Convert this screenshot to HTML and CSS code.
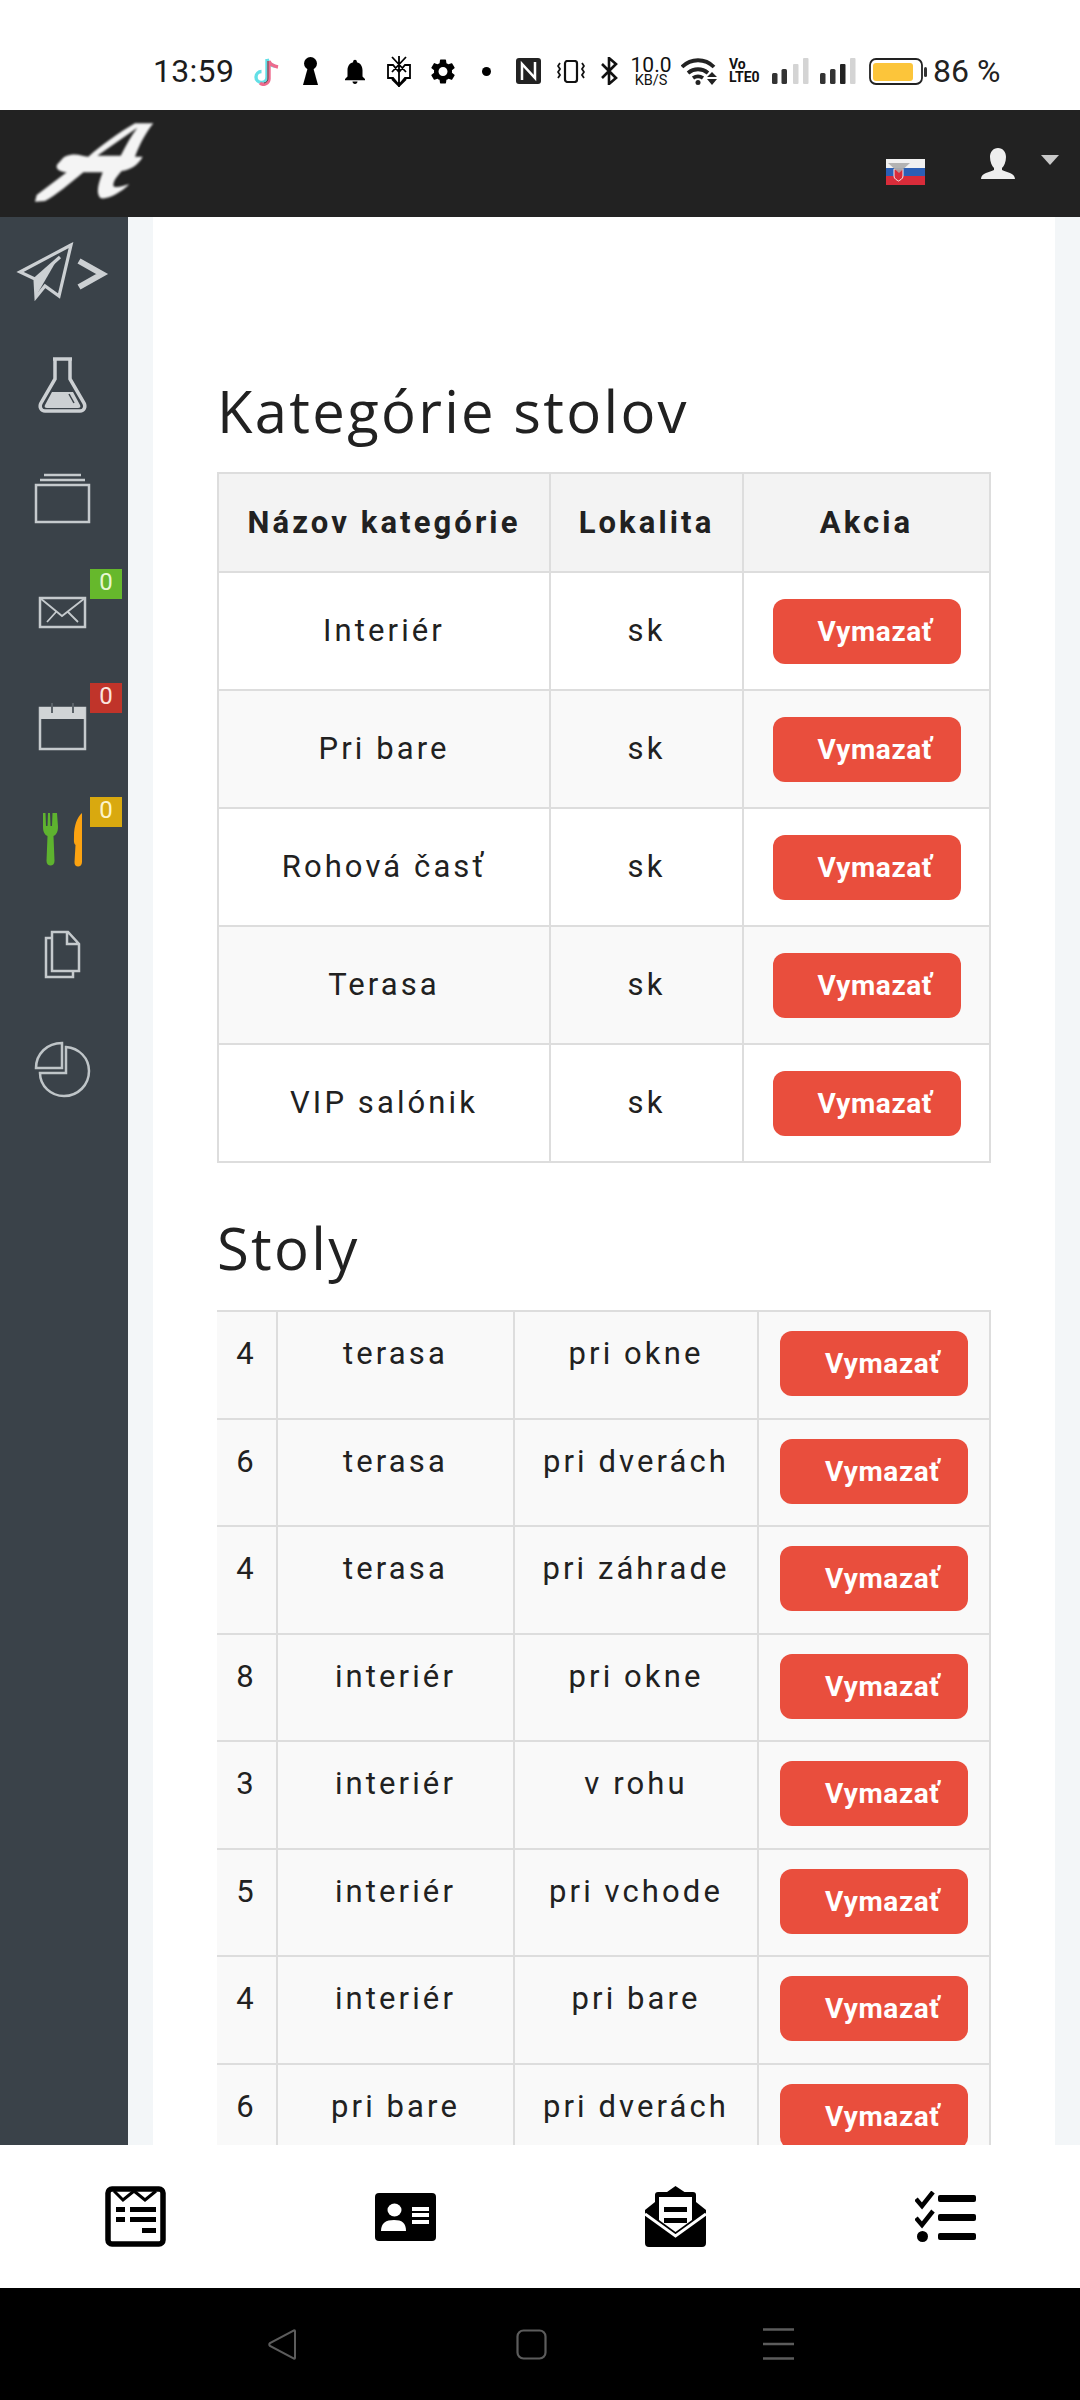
FILE: index.html
```html
<!DOCTYPE html>
<html lang="sk">
<head>
<meta charset="utf-8">
<title>Kategórie stolov</title>
<link rel="stylesheet" href="styles.css">
</head>
<body>
<div class="phone">
  <div class="status">
    <span class="time">13:59</span>
    <svg class="s-tiktok" viewBox="0 0 27 30"><g fill="none" stroke-width="3.4"><path stroke="#62dfe6" d="M14 3v18a5.5 5.5 0 1 1-5.5-5.5M14 3c1 4 4 6.500 8 7"/><path stroke="#ee6a8d" d="M16 5v18a5.500 5.500 0 0 1-9 4M16 5c1 3 4 5 9 6"/><path stroke="#555" stroke-width="1" d="M15 5v17a5 5 0 0 1-4 5"/></g></svg>
    <svg class="s-key" viewBox="0 0 15 28"><circle cx="7.500" cy="6.500" r="6.500"/><path d="M5 10h5l5 18H0z"/></svg>
    <svg class="s-bell" viewBox="4 2 16 20"><path d="M12 22c1.100 0 2-.9 2-2h-4c0 1.100.9 2 2 2zm6-6v-5c0-3.070-1.630-5.640-4.500-6.320V4c0-.83-.67-1.500-1.500-1.500s-1.500.67-1.500 1.500v.68C7.640 5.360 6 7.920 6 11v5l-2 2v1h16v-1l-2-2z"/></svg>
    <svg class="s-star" viewBox="0 0 24 31"><g fill="none" stroke="#000" stroke-width="1.800"><path d="M12 0v31M5 1l14 15M19 1L5 16M1 9h5l6 7 6-7h5v13h-5l-6 7-6-7H1zM5 23l7 7 7-7"/></g></svg>
    <svg class="s-gear" viewBox="2.500 2 19 20"><path d="M19.140 12.940c.04-.3.06-.61.06-.94 0-.32-.02-.64-.07-.94l2.030-1.580c.18-.14.23-.41.12-.61l-1.920-3.320c-.12-.22-.37-.29-.59-.22l-2.390.96c-.5-.38-1.030-.7-1.620-.94l-.36-2.540c-.04-.24-.24-.41-.48-.41h-3.840c-.24 0-.43.17-.47.41l-.36 2.540c-.59.24-1.130.57-1.620.94l-2.390-.96c-.22-.08-.47 0-.59.22L2.740 8.870c-.12.21-.08.47.12.61l2.030 1.580c-.05.3-.09.63-.09.94s.02.64.07.94l-2.030 1.580c-.18.14-.23.41-.12.61l1.920 3.320c.12.22.37.29.59.22l2.390-.96c.5.38 1.030.7 1.620.94l.36 2.540c.05.24.24.41.48.41h3.840c.24 0 .44-.17.47-.41l.36-2.540c.59-.24 1.130-.56 1.620-.94l2.390.96c.22.08.47 0 .59-.22l1.920-3.320c.12-.22.07-.47-.12-.61l-2.010-1.580zM12 15.600c-1.980 0-3.600-1.620-3.600-3.600s1.620-3.600 3.600-3.600 3.600 1.620 3.600 3.600-1.620 3.600-3.600 3.600z"/></svg>
    <span class="s-dot"></span>
    <svg class="s-nfc" viewBox="0 0 25 26"><rect width="25" height="26" rx="3" fill="#222"/><path d="M6 22V6l13 14V4" fill="none" stroke="#fff" stroke-width="2.500"/></svg>
    <svg class="s-vib" viewBox="0 0 28 23"><rect x="8" y="1" width="12" height="21" rx="2.500" fill="none" stroke="#111" stroke-width="2.200"/><path d="M3 3l-2 3 2 3-2 3 2 3-2 3M25 3l2 3-2 3 2 3-2 3 2 3" fill="none" stroke="#111" stroke-width="1.800"/></svg>
    <svg class="s-bt" viewBox="0 0 18 28"><path d="M2 7l14 14-7 6V1l7 6L2 21" fill="none" stroke="#111" stroke-width="2.600"/></svg>
    <span class="speed"><span class="speed-num">10.0</span><span class="speed-unit">KB/S</span></span>
    <svg class="s-wifi" viewBox="0 0 36 28"><g fill="none" stroke="#222" stroke-width="3.800"><path d="M1 10c9-9 23-9 32 0M7 16c6-5 14-5 20 0M12 21c3-2 7-2 10 0"/></g><circle cx="17" cy="25.500" r="2.500" fill="#222"/><path d="M31 15l5 5h-10zM31 28l-5-6h10z" fill="#222"/></svg>
    <span class="volte"><span>Vo</span><span>LTE0</span></span>
    <svg class="s-sig" viewBox="0 0 37 27"><rect y="15" width="5.500" height="11" rx="1.500" fill="#333"/><rect x="9.500" y="11" width="5.500" height="15" rx="1.500" fill="#333"/><rect x="21" y="6" width="5.500" height="20" rx="1" fill="#d4d4d4"/><rect x="31" y="0" width="5.500" height="26" rx="1" fill="#d4d4d4"/></svg>
    <svg class="s-sig s-sig2" viewBox="0 0 37 27"><rect y="15" width="5.500" height="11" rx="1.500" fill="#333"/><rect x="10" y="11" width="5.500" height="15" rx="1.500" fill="#333"/><rect x="20" y="6" width="5.500" height="20" rx="1" fill="#222"/><rect x="30" y="0" width="5.500" height="26" rx="1" fill="#d4d4d4"/></svg>
    <svg class="s-bat" viewBox="0 0 58 27"><rect x="1" y="1" width="52" height="25" rx="6" fill="none" stroke="#222" stroke-width="1.800"/><rect x="4" y="5" width="40" height="18" rx="3" fill="#fcc53a"/><rect x="55" y="9" width="3" height="10" rx="1.500" fill="#333"/></svg>
    <span class="pct">86 %</span>
  </div>

  <header class="navbar">
    <svg class="logo" viewBox="0 0 450 285"><path fill="#f4f4f4" fill-rule="evenodd" d="M400 25L345 25C300 50 240 95 205 125C185 125 175 115 150 120C130 122 125 135 112 148C105 160 115 170 140 172L50 240L45 260L75 258C110 240 150 205 190 172L248 172C240 195 225 230 240 248C255 258 300 235 328 208C310 212 285 222 280 212C280 195 295 180 305 168C330 165 355 150 368 125L345 125C360 85 380 50 400 25ZM352 38L232 122L302 122C318 90 335 60 352 38Z"/></svg>
    <svg class="flag" viewBox="0 0 39 26"><rect width="39" height="9" fill="#f1f1f1"/><rect y="9" width="39" height="8" fill="#2c5fb5"/><rect y="17" width="39" height="9" fill="#d92c3a"/><path d="M8 10h9v7c0 3-3 4-4.500 5C11 21 8 20 8 17z" fill="#d92c3a" stroke="#eee"/><path d="M2 4h22L13 14z" fill="#a8a8a8" opacity=".85"/></svg>
    <svg class="user" viewBox="0 0 34 31"><path fill="#eee" d="M17 0c5 0 8 4 8 9 0 5-2 9-4 11v2c4 2 13 3 13 9H0c0-6 9-7 13-9v-2c-2-2-4-6-4-11 0-5 3-9 8-9z"/></svg>
    <span class="caret"></span>
  </header>

  <div class="main">
    <nav class="side">
      <a class="side-item"><svg viewBox="0 0 128 114"><g fill="none" stroke="#ccd0d3" stroke-width="3.200" stroke-linejoin="miter"><path d="M71 31L20 58l15 7 1 18 9-11 14 10z"/><path d="M35 65l25-22"/></g><path d="M34 65l24-21-15 26-7 12z" fill="#ccd0d3"/><path d="M79 47l23 13-23 13" fill="none" stroke="#ccd0d3" stroke-width="6"/></svg></a>
      <a class="side-item"><svg viewBox="0 0 128 114"><path d="M53 31h19M55 31v20L41 75c-2 4 0 8 4 8h35c4 0 6-4 4-8L70 51V31" fill="none" stroke="#ccd0d3" stroke-width="3.500"/><path d="M52 64h21l7 13c1 2 0 3-2 3H47c-2 0-3-1-2-3z" fill="#ccd0d3"/><path d="M69 66l5 9" stroke="#3a4249" stroke-width="1.500"/></svg></a>
      <a class="side-item"><svg viewBox="0 0 128 114"><g fill="none" stroke="#c5cacd" stroke-width="2.500"><path d="M44 33h37M40 38h45"/><rect x="36" y="43" width="53" height="37"/></g></svg></a>
      <a class="side-item"><svg viewBox="0 0 128 114"><g fill="none" stroke="#c5cacd" stroke-width="2.500"><rect x="40" y="42" width="45" height="29"/><path d="M40 42l22 18 23-18M47 66l9-10M78 66l-10-10" stroke-width="1.800"/></g></svg><span class="badge badge-green">0</span></a>
      <a class="side-item"><svg viewBox="0 0 128 114"><rect x="40" y="38" width="45" height="41" fill="none" stroke="#c5cacd" stroke-width="2.500"/><rect x="40" y="37" width="45" height="12" fill="#d0d4d6"/><path d="M52 33v10M73 33v10" stroke="#5a6268" stroke-width="2"/></svg><span class="badge badge-red">0</span></a>
      <a class="side-item"><svg viewBox="0 0 128 114"><path fill="#5eb32f" d="M43 29h2.500l.5 13h1.500l.5-13h2l.5 13h1.500l.5-13H57l1 14c0 5-2 8-4.500 9l1 25c0 6-8 6-8 0l1-25C45 51 43 48 43 43z"/><path fill="#fca311" d="M82 29v49c0 6-8 6-7.500 0l1-17c-2-2-1.500-4-1.500-9 0-10 3-19 8-23z"/></svg><span class="badge badge-yellow">0</span></a>
      <a class="side-item"><svg viewBox="0 0 128 114"><g fill="none" stroke="#c5cacd" stroke-width="2.500"><path d="M52 40h-6v39h27v-6"/><path d="M52 34h16l11 12v27H52zM67 34v12h12"/></g></svg></a>
      <a class="side-item"><svg viewBox="0 0 128 114"><g fill="none" stroke="#bfc5c8" stroke-width="2.500"><path d="M62 31v25H36c0-14 11-25 26-25z"/><path d="M66 35c13 1 23 11 23 24 0 14-11 25-25 25-13 0-24-10-24-23h26z"/></g></svg></a>
    </nav>
    <section class="content">
      <div class="card">
        <h2 class="title first">Kategórie stolov</h2>
        <table class="tbl cats">
          <thead>
            <tr><th class="c1">Názov kategórie</th><th class="c2">Lokalita</th><th class="c3">Akcia</th></tr>
          </thead>
          <tbody>
            <tr><td>Interiér</td><td>sk</td><td><a class="btn">Vymazať</a></td></tr>
            <tr><td>Pri bare</td><td>sk</td><td><a class="btn">Vymazať</a></td></tr>
            <tr><td>Rohová časť</td><td>sk</td><td><a class="btn">Vymazať</a></td></tr>
            <tr><td>Terasa</td><td>sk</td><td><a class="btn">Vymazať</a></td></tr>
            <tr><td>VIP salónik</td><td>sk</td><td><a class="btn">Vymazať</a></td></tr>
          </tbody>
        </table>
        <h2 class="title second">Stoly</h2>
        <table class="tbl tables">
          <colgroup><col class="t1"><col class="t2"><col class="t3"><col class="t4"></colgroup>
          <tbody>
            <tr><td>4</td><td>terasa</td><td>pri okne</td><td><a class="btn">Vymazať</a></td></tr>
            <tr><td>6</td><td>terasa</td><td>pri dverách</td><td><a class="btn">Vymazať</a></td></tr>
            <tr><td>4</td><td>terasa</td><td>pri záhrade</td><td><a class="btn">Vymazať</a></td></tr>
            <tr><td>8</td><td>interiér</td><td>pri okne</td><td><a class="btn">Vymazať</a></td></tr>
            <tr><td>3</td><td>interiér</td><td>v rohu</td><td><a class="btn">Vymazať</a></td></tr>
            <tr><td>5</td><td>interiér</td><td>pri vchode</td><td><a class="btn">Vymazať</a></td></tr>
            <tr><td>4</td><td>interiér</td><td>pri bare</td><td><a class="btn">Vymazať</a></td></tr>
            <tr><td>6</td><td>pri bare</td><td>pri dverách</td><td><a class="btn">Vymazať</a></td></tr>
          </tbody>
        </table>
      </div>
    </section>
  </div>

  <footer class="tabs">
    <a class="tab"><svg class="t-a" viewBox="0 0 61 61"><rect x="3" y="3" width="55" height="55" rx="4" fill="none" stroke="#000" stroke-width="5.500"/><path d="M9 5l9 9 11-9 11 9 11-9" fill="none" stroke="#000" stroke-width="3"/><path d="M11 21h9v5h-9zM25 21h26v5H25zM11 31h9v5h-9zM25 31h26v5H25zM37 42h14v5H37z"/></svg></a>
    <a class="tab"><svg class="t-b" viewBox="0 0 61 48"><rect width="61" height="48" rx="4"/><ellipse cx="19.500" cy="17" rx="7" ry="6.500" fill="#fff"/><path d="M6 38c0-8 5-11 13-11s12 3 12 11z" fill="#fff"/><path d="M37 14h17v4H37zM37 20h17v4H37zM37 27h17v4H37z" fill="#fff"/></svg></a>
    <a class="tab"><svg class="t-c" viewBox="0 0 61 61"><path d="M30.500 0l9 6H48a3 3 0 0 1 3 3v7l10 8v33a4 4 0 0 1-4 4H4a4 4 0 0 1-4-4V24l10-8V9a3 3 0 0 1 3-3h9z"/><path d="M14 11h33v23L30.500 46 14 34z" fill="#fff"/><path d="M0 28l30.500 22L61 28" fill="none" stroke="#fff" stroke-width="3"/><path d="M19 21h23v5H19zM19 32h23v5H19z"/></svg></a>
    <a class="tab"><svg class="t-d" viewBox="0 0 61 51"><path d="M1 8l6 7L18 1M1 27l6 7 11-14" fill="none" stroke="#000" stroke-width="4.500"/><ellipse cx="7.500" cy="45.500" rx="5.500" ry="5.500"/><rect x="23" y="4" width="38" height="7" rx="2"/><rect x="23" y="23" width="38" height="7" rx="2"/><rect x="23" y="42" width="38" height="7" rx="2"/></svg></a>
  </footer>

  <div class="sysnav">
    <svg class="k-back" viewBox="0 0 30 31"><path d="M28 2v27c0 1-1 1-2 0L3 17c-1-1-1-2 0-3L26 2c1-1 2-1 2 0z" fill="none" stroke="#5c5c5c" stroke-width="2"/></svg>
    <svg class="k-home" viewBox="0 0 31 31"><rect x="1.500" y="1.500" width="28" height="28" rx="6" fill="none" stroke="#5c5c5c" stroke-width="2.200"/></svg>
    <svg class="k-menu" viewBox="0 0 31 32"><path d="M0 1.500h31M0 16h31M0 30.500h31" stroke="#5c5c5c" stroke-width="2.400"/></svg>
  </div>
</div>
</body>
</html>
```

FILE: styles.css
```css
* { box-sizing: border-box; }
html, body { margin: 0; padding: 0; }
body { width: 1080px; height: 2400px; overflow: hidden; font-family: Roboto, "Liberation Sans", sans-serif; color: #212121; background: #fff; }
a { color: inherit; text-decoration: none; }
svg { display: block; flex: none; }

.phone { display: flex; flex-direction: column; width: 1080px; height: 2400px; }

/* status bar */
.status { display: flex; align-items: center; flex: none; height: 110px; padding: 32px 0 0 153px; background: #fff; color: #111; }
.time { font-size: 32px; width: 79px; letter-spacing: 0.3px; line-height: 1; color: #1c1c1c; }
.s-tiktok { width: 27px; height: 30px; margin-left: 21px; }
.s-key { width: 15px; height: 28px; margin-left: 23px; }
.s-bell { width: 22px; height: 25px; margin-left: 26px; }
.s-star { width: 24px; height: 31px; margin-left: 21px; }
.s-gear { width: 24px; height: 25px; margin-left: 20px; }
.s-dot { width: 9px; height: 9px; margin-left: 27px; border-radius: 50%; background: #000; }
.s-nfc { width: 25px; height: 26px; margin-left: 25px; }
.s-vib { width: 28px; height: 23px; margin-left: 16px; }
.s-bt { width: 18px; height: 28px; margin-left: 15px; }
.speed { display: flex; flex-direction: column; align-items: center; width: 40px; margin-left: 13px; line-height: 1; }
.speed-num { font-size: 21px; line-height: 18px; }
.speed-unit { font-size: 14.500px; line-height: 13px; }
.s-wifi { width: 36px; height: 28px; margin-left: 10px; }
.volte { display: flex; flex-direction: column; width: 30px; margin-left: 12px; font-size: 14px; line-height: 13px; font-weight: 700; letter-spacing: 0; }
.s-sig { width: 37px; height: 27px; margin-left: 13px; }
.s-sig2 { margin-left: 11px; }
.s-bat { width: 58px; height: 27px; margin-left: 12px; }
.pct { margin-left: 6px; font-size: 32px; line-height: 1; color: #222; white-space: nowrap; }

/* navbar */
.navbar { display: flex; align-items: center; flex: none; height: 107px; padding: 0 21px 0 20px; background: #222; }
.logo { width: 150px; height: 95px; margin-top: -2px; filter: blur(0.8px); }
.flag { width: 39px; height: 26px; margin: 17px 0 0 auto; }
.user { width: 34px; height: 31px; margin-left: 56px; }
.caret { width: 0; height: 0; margin: -7px 0 0 26px; border-style: solid; border-width: 10px 9.500px 0; border-color: #c8c8c8 transparent transparent; }

/* main */
.main { display: flex; flex: none; height: 1928px; overflow: hidden; }
.side { flex: none; width: 128px; background: #3a4249; }
.side-item { position: relative; display: block; width: 128px; height: 114px; }
.side-item:first-child { margin-top: -3px; }
.side-item svg { width: 128px; height: 114px; }
.badge { position: absolute; top: 13px; left: 90px; width: 32px; height: 30px; font-size: 24px; line-height: 26px; text-align: center; }
.badge-green { background: #66b82c; color: #e8f7d2; }
.badge-red { background: #c0342a; color: #fbe5df; }
.badge-yellow { background: #d9a90f; color: #fdf4cc; }

.content { flex: 1; min-width: 0; padding: 0 25px; background: #f3f6f8; }
.card { height: 100%; padding: 0 64px; background: #fff; }
.title { margin: 0; font-family: "Open Sans", "Noto Sans", sans-serif; font-weight: 400; font-size: 58px; line-height: 80px; letter-spacing: 2.300px; color: #212121; }
.first { height: 255px; padding-top: 154px; }
.second { height: 147px; padding-top: 45px; }

.tbl { width: 774px; border-collapse: collapse; table-layout: fixed; font-size: 31px; letter-spacing: 3.100px; }
.tbl th, .tbl td { padding: 0; border: 2px solid #ddd; text-align: center; }
.cats th { height: 99px; background: #f3f3f3; font-weight: 700; }
.cats td { height: 118px; }
.cats td:not(:last-child) { padding-bottom: 2px; }
.cats tbody tr:nth-child(even) td { background: #f9f9f9; }
.c1 { width: 332px; }
.c2 { width: 193px; }
.c3 { width: 247px; }
.btn { display: inline-block; width: 188px; height: 65px; padding-left: 45px; border-radius: 12px; background: #e94e3d; color: #fff; font-size: 28px; font-weight: 700; line-height: 65px; letter-spacing: 0.600px; text-align: left; white-space: nowrap; vertical-align: middle; }

.tables td { height: 107.500px; background: #f9f9f9; vertical-align: top; padding-top: 21px; line-height: 42px; }
.tables td:first-child { border-left: 0; }
.tables td:last-child { padding-top: 19px; line-height: 0; }
.tables .btn { vertical-align: top; line-height: 65px; }
.t1 { width: 60px; }
.t2 { width: 237px; }
.t3 { width: 244px; }
.t4 { width: 232px; }

/* footer */
.tabs { display: grid; grid-template-columns: repeat(4, 1fr); flex: none; height: 143px; background: #fff; }
.tab { display: flex; align-items: center; justify-content: center; }
.t-a, .t-c { width: 61px; height: 61px; }
.t-b { width: 61px; height: 48px; }
.t-d { width: 61px; height: 51px; }

.sysnav { display: flex; align-items: center; flex: none; height: 112px; padding-left: 267px; background: #000; }
.k-back { width: 30px; height: 31px; }
.k-home { width: 31px; height: 31px; margin-left: 219px; }
.k-menu { width: 31px; height: 32px; margin-left: 216px; }
```
